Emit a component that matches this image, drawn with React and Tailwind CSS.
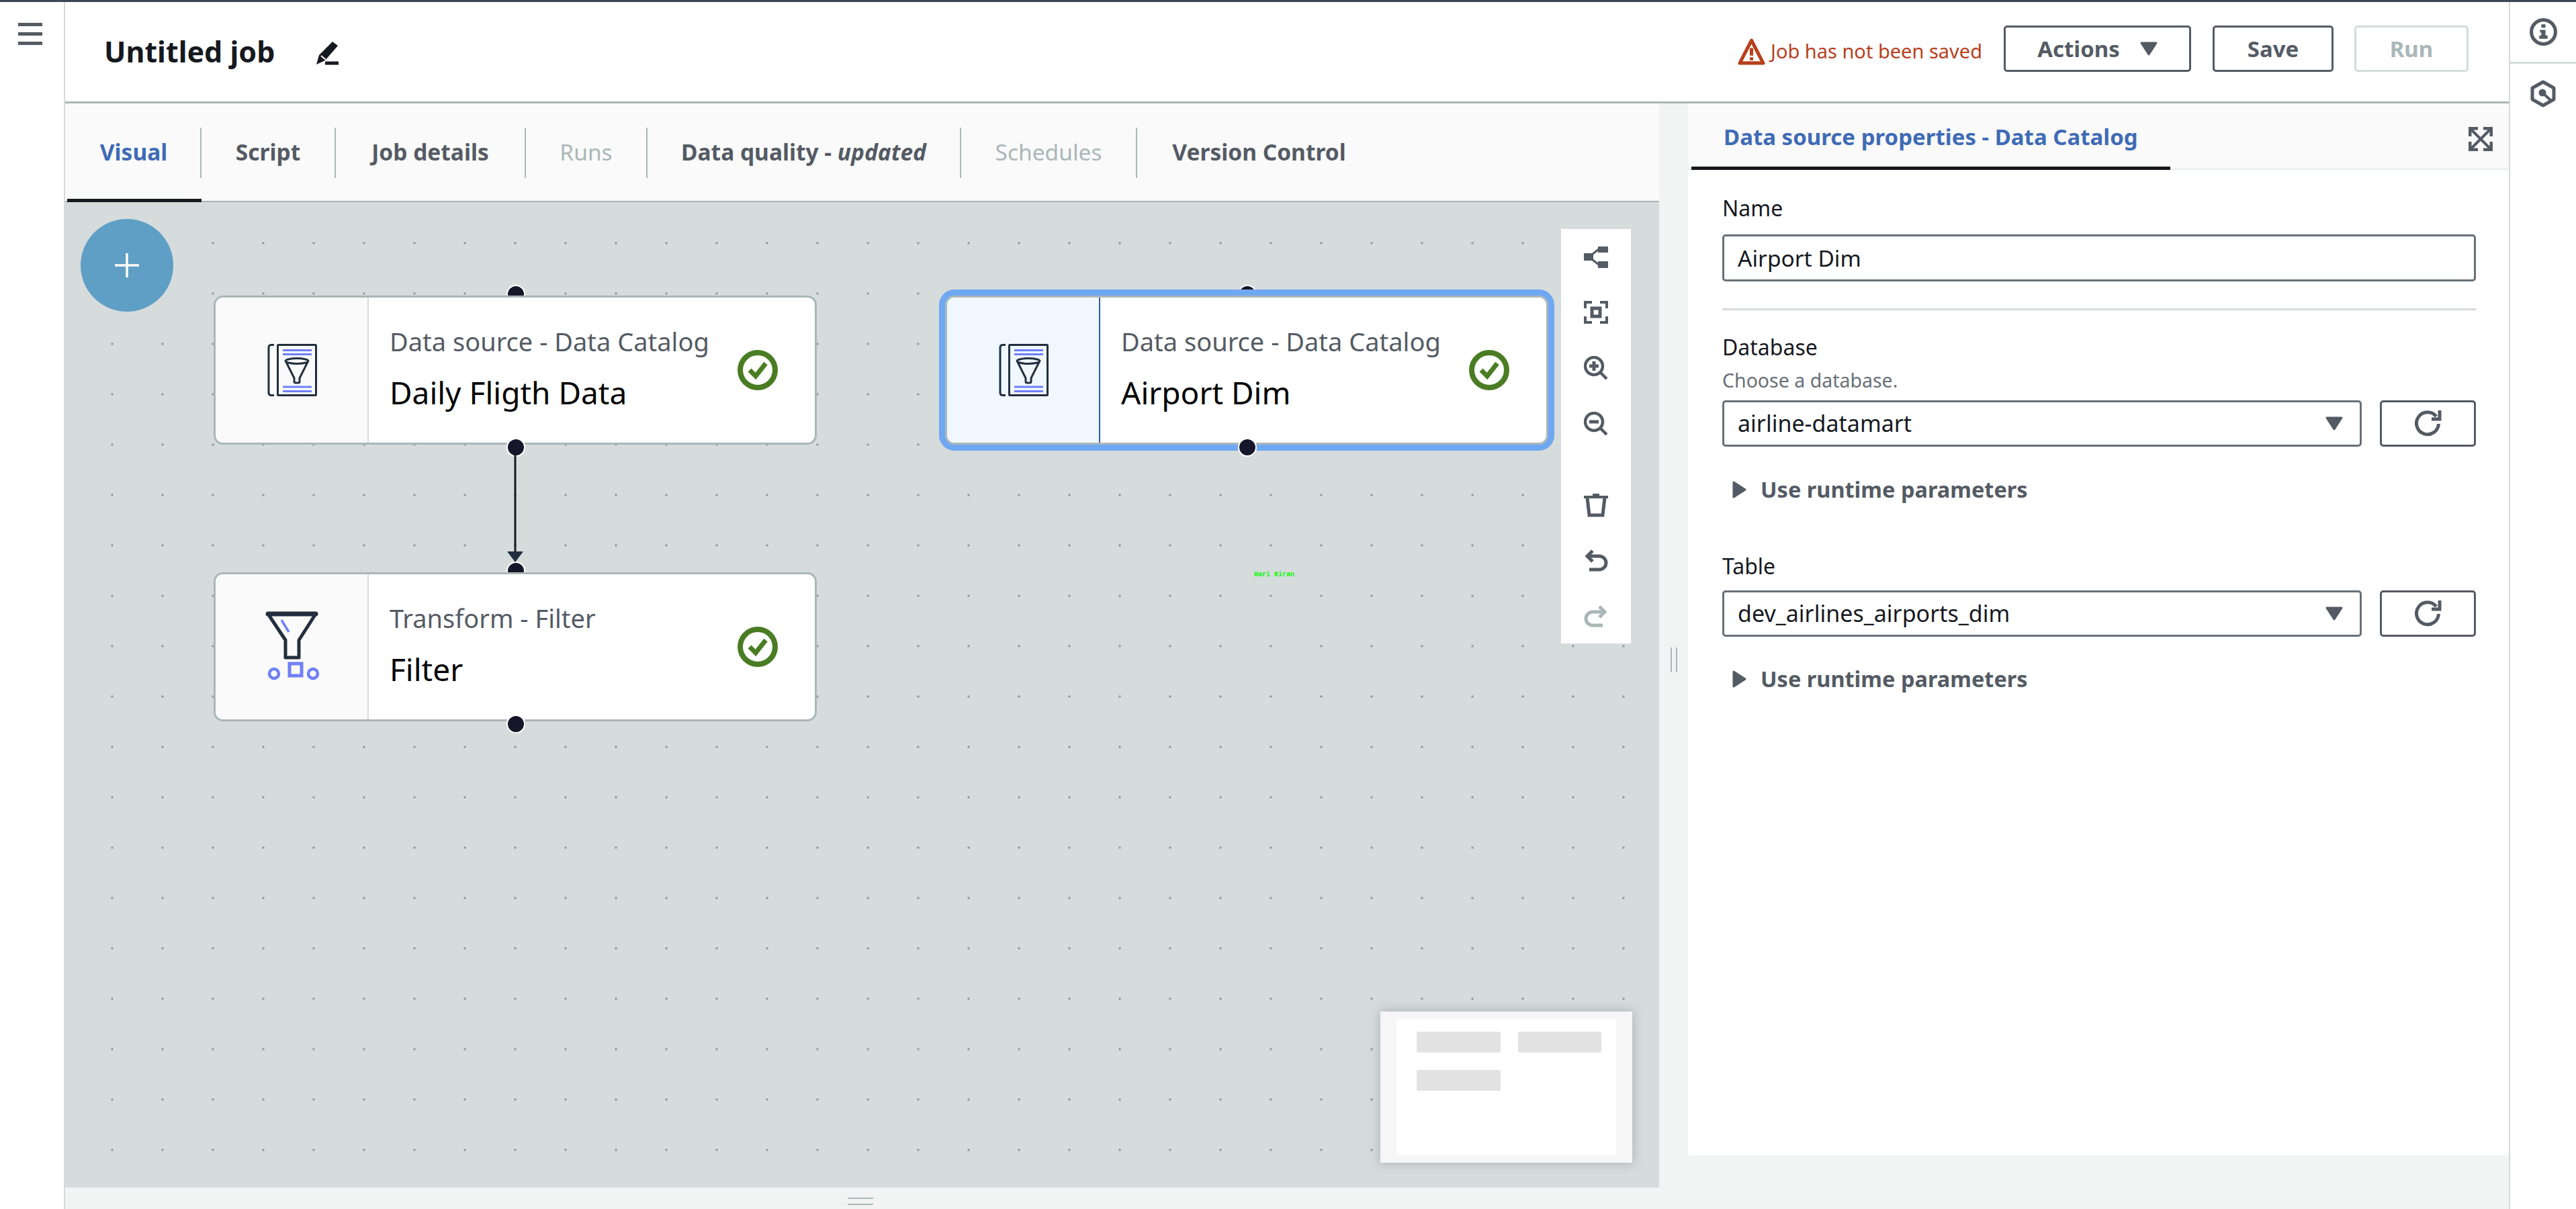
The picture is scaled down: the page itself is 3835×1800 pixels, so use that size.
const TABS = [
  { label: 'Visual', width: 'w-[200px] border-r-2', text: 'text-[#3f6bb5]', active: true },
  { label: 'Script', width: 'w-[200px] border-r-2', text: 'text-[#545b64]' },
  { label: 'Job details', width: 'w-[283px] border-r-2', text: 'text-[#545b64]' },
  { label: 'Runs', width: 'w-[181px] border-r-2', text: 'text-[#aab7b8] font-normal' },
  { label: 'Data quality', width: 'w-[467px] border-r-2', text: 'text-[#545b64]', updated: true },
  { label: 'Schedules', width: 'w-[262px] border-r-2', text: 'text-[#aab7b8] font-normal' },
  { label: 'Version Control', width: 'w-[363px]', text: 'text-[#545b64]' },
]

function CatalogIcon() {
  return (
    <svg width="80" height="84" viewBox="5 6 80 84" fill="none">
      <path d="M17 10.5h-4q-4 0-4 4v67q0 4 4 4h4" stroke="#232f3e" strokeWidth="3" />
      <rect x="22.5" y="10.5" width="57" height="75" rx="1" stroke="#232f3e" strokeWidth="3" />
      <path d="M30 18.5h43M30 24.5h43M30 73h43M30 79.5h43" stroke="#6f80f7" strokeWidth="3" />
      <ellipse cx="51" cy="34.5" rx="17" ry="4" stroke="#232f3e" strokeWidth="3" />
      <path d="M35 36l12 24v5q0 2 2 2h4q2 0 2-2v-5l12-24" stroke="#232f3e" strokeWidth="3" strokeLinejoin="round" />
    </svg>
  )
}

function FilterIcon() {
  return (
    <svg width="82" height="106" viewBox="0 0 82 106" fill="none">
      <path d="M4 4h71l-25 39v26H30V43z" stroke="#232f3e" strokeWidth="5" strokeLinejoin="round" />
      <path d="M4 4h71" stroke="#232f3e" strokeWidth="7" strokeLinecap="round" />
      <path d="M24 13l11 18" stroke="#6f80f7" strokeWidth="3.5" />
      <circle cx="13" cy="93" r="7" stroke="#6f80f7" strokeWidth="4.5" />
      <rect x="36" y="78" width="18" height="18" stroke="#6f80f7" strokeWidth="5" />
      <circle cx="71" cy="93" r="7" stroke="#6f80f7" strokeWidth="4.5" />
    </svg>
  )
}

function CheckIcon() {
  return (
    <svg width="60" height="60" viewBox="0 0 60 60" fill="none" className="shrink-0">
      <circle cx="30" cy="30" r="26" stroke="#4a7d23" strokeWidth="8" />
      <path d="M18 30l9 9 15-19" stroke="#4a7d23" strokeWidth="7" />
    </svg>
  )
}

function Caret({ className }) {
  return (
    <svg width="26" height="21" viewBox="0 0 26 21" className={className}>
      <path d="M2 2h22L13 19z" fill="#545b64" stroke="#545b64" strokeWidth="3" strokeLinejoin="round" />
    </svg>
  )
}

function Refresh() {
  return (
    <svg width="40" height="42" viewBox="0 0 40 42" fill="none">
      <path d="M32 10A16.5 16.5 0 1 0 35.5 21" stroke="#545b64" strokeWidth="5" />
      <path d="M25 14h12V1" stroke="#545b64" strokeWidth="5" />
    </svg>
  )
}

function ToolIcon({ children, className = '' }) {
  return (
    <svg width="36" height="36" viewBox="0 0 36 36" fill="none" className={className}>
      {children}
    </svg>
  )
}

function Handle({ className }) {
  return <div className={`absolute left-[436px] w-[28px] h-[28px] rounded-full bg-[#16162a] border-2 border-white ${className}`}></div>
}

function Node({ pos, title, name, icon, selected }) {
  return (
    <div className={`absolute w-[898px] h-[222px] ${pos}`}>
      <Handle className="top-[-16px]" />
      <div
        className={`relative flex w-full h-full rounded-[14px] border-[3px] border-[#aab7b8] bg-white overflow-hidden ${
          selected ? 'outline-[9px] outline-[#6ea8f2] overflow-visible' : ''
        }`}
      >
        <div
          className={`w-[228px] shrink-0 flex items-center justify-center pl-[3px] rounded-l-[11px] border-r-2 ${
            selected ? 'bg-[#f0f7ff] border-[#2f5f9e]' : 'bg-[#fafafa] border-[#d5dbdb]'
          }`}
        >
          {icon}
        </div>
        <div className="flex-1 flex items-center pl-[31px] pr-[55px]">
          <div className="flex-1 pb-[5px]">
            <div className="text-[38px] leading-[44px] text-[#545b64]">{title}</div>
            <div className="mt-[27px] text-[46px] leading-[54px] text-[#000]">{name}</div>
          </div>
          <CheckIcon />
        </div>
      </div>
      <Handle className="bottom-[-18px]" />
    </div>
  )
}

function SelectRow({ value }) {
  return (
    <div className="flex gap-[27px] mt-[10px]">
      <div className="flex-1 h-[69px] flex items-center justify-between pl-[20px] pr-[25px] border-[3px] border-[#687078] rounded-[5px] text-[34px] text-[#16191f]">
        <span>{value}</span>
        <Caret />
      </div>
      <div className="w-[143px] h-[69px] flex items-center justify-center border-[3px] border-[#545b64] rounded-[5px]">
        <Refresh />
      </div>
    </div>
  )
}

function RuntimeParams({ className }) {
  return (
    <div className={`flex items-center gap-[21px] pl-[15px] h-[44px] ${className}`}>
      <svg width="21" height="26" viewBox="0 0 21 26">
        <path d="M2 2l17 11L2 24z" fill="#545b64" stroke="#545b64" strokeWidth="3" strokeLinejoin="round" />
      </svg>
      <span className="text-[32.5px] font-bold text-[#545b64]">Use runtime parameters</span>
    </div>
  )
}

export default function App() {
  return (
    <div className="w-[3835px] h-[1800px] flex flex-col bg-white overflow-hidden font-['Noto_Sans','Open_Sans',sans-serif]">
      <div className="h-[3px] bg-[#3a4653] shrink-0"></div>
      <div className="flex-1 flex min-h-0">
        {/* Left rail */}
        <div className="w-[97px] shrink-0 border-r-2 border-[#d5dbdb] pt-[31px] pl-[27px]">
          <div className="w-[36px] flex flex-col gap-[9px]">
            <div className="h-[5px] bg-[#545b64]"></div>
            <div className="h-[5px] bg-[#545b64]"></div>
            <div className="h-[5px] bg-[#545b64]"></div>
          </div>
        </div>

        {/* Main */}
        <div className="flex-1 min-w-0 flex flex-col">
          <div className="h-[151px] shrink-0 flex items-center border-b-[3px] border-[#aab7b8] pl-[58px] pr-[60px] pb-[2px]">
            <span className="text-[43px] font-bold text-[#16191f] leading-none">Untitled job</span>
            <svg width="36" height="36" viewBox="0 0 36 36" className="ml-[60px] mt-[6px]">
              <path d="M26 1l8 6-19 22-13 6 4-14z" fill="#16191f" />
              <path d="M9 22l7 6" stroke="#fff" strokeWidth="2" />
              <path d="M15 33h20" stroke="#16191f" strokeWidth="5" />
            </svg>
            <div className="flex-1"></div>
            <svg width="41" height="41" viewBox="0 0 40 40" fill="none">
              <path d="M20 4L37 37H3z" stroke="#b7401e" strokeWidth="5" strokeLinejoin="round" />
              <path d="M17.5 15h5v11h-5zM17.5 28.5h5v4.5h-5z" fill="#b7401e" />
            </svg>
            <span className="ml-[8px] text-[29px] text-[#b7401e]">Job has not been saved</span>
            <div className="ml-[32px] mb-[7px] w-[279px] h-[69px] flex items-center justify-center gap-[30px] border-[3px] border-[#545b64] rounded-[5px] text-[33px] font-bold text-[#545b64]">
              Actions
              <Caret />
            </div>
            <div className="ml-[32px] mb-[7px] w-[180px] h-[69px] flex items-center justify-center border-[3px] border-[#545b64] rounded-[5px] text-[33px] font-bold text-[#545b64]">
              Save
            </div>
            <div className="ml-[31px] mb-[7px] w-[170px] h-[69px] flex items-center justify-center border-[3px] border-[#d5dbdb] rounded-[5px] text-[33px] font-bold text-[#aab7b8]">
              Run
            </div>
          </div>

          <div className="flex-1 min-h-0 flex flex-col bg-[#f2f3f3]">
            <div className="flex-1 min-h-0 flex">
              {/* Editor column */}
              <div className="w-[2373px] shrink-0 flex flex-col">
                <div className="h-[147px] shrink-0 flex items-center pl-[3px] bg-[#fafafa] border-b-2 border-[#aab7b8] relative">
                  {TABS.map((tab) => (
                    <div
                      key={tab.label}
                      className={`h-[75px] mt-[1px] pb-[2px] flex items-center justify-center border-[#aab7b8] text-[33.5px] font-bold whitespace-pre ${tab.width} ${tab.text}`}
                    >
                      {tab.label}
                      {tab.updated && <span> - <i>updated</i></span>}
                    </div>
                  ))}
                  <div className="absolute left-[3px] bottom-[-2px] w-[200px] h-[5px] bg-[#16191f]"></div>
                </div>

                <div className="relative flex-1 bg-[#d6dbdc] bg-[radial-gradient(circle,#8d9899_1.6px,transparent_2px)] bg-[length:75px_75px] bg-[position:32.5px_23.5px]">
                  {/* Add node */}
                  <div className="absolute left-[23px] top-[25px] w-[138px] h-[138px] rounded-full bg-[#5f9fc5] flex items-center justify-center">
                    <svg width="36" height="36" viewBox="0 0 36 36">
                      <path d="M18 0v36M0 18h36" stroke="#fff" strokeWidth="3.5" />
                    </svg>
                  </div>

                  <Node pos="left-[221px] top-[139px]" title="Data source - Data Catalog" name="Daily Fligth Data" icon={<CatalogIcon />} />
                  <Node pos="left-[221px] top-[551px]" title="Transform - Filter" name="Filter" icon={<FilterIcon />} />
                  <Node pos="left-[1310px] top-[139px]" title="Data source - Data Catalog" name="Airport Dim" icon={<CatalogIcon />} selected />

                  {/* Edge between source and filter */}
                  <svg width="28" height="162" viewBox="0 0 28 162" className="absolute left-[656px] top-[376px]">
                    <path d="M14 0v145" stroke="#16191f" strokeWidth="3" />
                    <path d="M2 144h24l-12 16z" fill="#232f3e" />
                  </svg>

                  <div className="absolute left-[1770px] top-[547px] text-[10px] leading-[16px] font-bold font-['Liberation_Mono',monospace] text-[#00ff00]">
                    Hari Kiran
                  </div>

                  {/* Canvas tools */}
                  <div className="absolute left-[2227px] top-[40px] w-[104px] h-[617px] bg-white flex flex-col items-center pt-[23px]">
                    <ToolIcon>
                      <path d="M0 13h14v11H0zM21 3h15v9H21zM21 25h15v10H21z" fill="#545b64" />
                      <path d="M12 15l10-8M12 22l10 8" stroke="#545b64" strokeWidth="3" />
                    </ToolIcon>
                    <ToolIcon className="mt-[47px]">
                      <path d="M2 12V3h10M24 3h10v9M2 24v9h10M24 33h10v-9" stroke="#545b64" strokeWidth="4" />
                      <rect x="12" y="12" width="12" height="12" stroke="#545b64" strokeWidth="5" />
                    </ToolIcon>
                    <ToolIcon className="mt-[47px]">
                      <circle cx="15" cy="15" r="13" stroke="#545b64" strokeWidth="4.5" />
                      <path d="M8 15h14M15 8v14" stroke="#545b64" strokeWidth="5" />
                      <path d="M24 24l10 10" stroke="#545b64" strokeWidth="4.5" />
                    </ToolIcon>
                    <ToolIcon className="mt-[47px]">
                      <circle cx="15" cy="15" r="13" stroke="#545b64" strokeWidth="4.5" />
                      <path d="M8 15h14" stroke="#545b64" strokeWidth="5" />
                      <path d="M24 24l10 10" stroke="#545b64" strokeWidth="4.5" />
                    </ToolIcon>
                    <ToolIcon className="mt-[85px]">
                      <path d="M0 6h36M13 3h10" stroke="#545b64" strokeWidth="4" />
                      <path d="M5 7l3 26h20l3-26" stroke="#545b64" strokeWidth="5" />
                    </ToolIcon>
                    <ToolIcon className="mt-[47px]">
                      <path d="M13 3L5 11l8 8" stroke="#545b64" strokeWidth="5" />
                      <path d="M6 11h17a10 10 0 0 1 0 20H8" stroke="#545b64" strokeWidth="5" />
                    </ToolIcon>
                    <ToolIcon className="mt-[47px]">
                      <path d="M23 3l8 8-8 8" stroke="#aab7b8" strokeWidth="5" />
                      <path d="M30 11H13a10 10 0 0 0 0 20h15" stroke="#aab7b8" strokeWidth="5" />
                    </ToolIcon>
                  </div>

                  {/* Minimap */}
                  <div className="absolute left-[1958px] top-[1205px] w-[375px] h-[225px] bg-[#f6f6f6] shadow-[0_0_16px_rgba(84,91,100,0.35)] px-[24px] py-[11px]">
                    <div className="h-full bg-white pl-[30px] pr-[22px] pt-[19px]">
                      <div className="grid grid-cols-[125px_124px] gap-x-[26px] gap-y-[26px]">
                        <div className="h-[31px] bg-[#e2e2e2] rounded-[2px]"></div>
                        <div className="h-[31px] bg-[#e2e2e2] rounded-[2px]"></div>
                        <div className="h-[31px] bg-[#e2e2e2] rounded-[2px]"></div>
                      </div>
                    </div>
                  </div>
                </div>
              </div>

              {/* Splitter */}
              <div className="w-[43px] shrink-0 flex justify-center pt-[810px] pl-[1px]">
                <div className="w-[10px] h-[37px] border-x-2 border-[#aab7b8]"></div>
              </div>

              {/* Properties panel */}
              <div className="flex-1 min-w-0 flex flex-col pb-[48px]">
                <div className="h-[99px] shrink-0 flex items-end justify-between bg-[#fafafa] border-b-2 border-[#eaeded] pl-[5px] pr-[24px] relative">
                  <div className="w-[713px] h-[97px] border-b-[5px] border-[#16191f] mb-[-2px] pl-[48px] pt-[25px] text-[33px] leading-[46px] font-bold text-[#3f6bb5]">
                    Data source properties - Data Catalog
                  </div>
                  <svg width="36" height="36" viewBox="0 0 36 36" fill="none" className="mb-[26px]">
                    <path d="M2 14V2h12M22 2h12v12M2 22v12h12M22 34h12V22" stroke="#545b64" strokeWidth="5" />
                    <path d="M4 4l28 28M32 4L4 32" stroke="#545b64" strokeWidth="4" />
                  </svg>
                </div>
                <div className="flex-1 bg-white pl-[51px] pr-[49px] pt-[35px]">
                  <div className="text-[32px] leading-[44px] text-[#16191f]">Name</div>
                  <div className="mt-[17px] h-[70px] flex items-center pl-[20px] border-[3px] border-[#687078] rounded-[5px] text-[33.5px] text-[#16191f]">
                    Airport Dim
                  </div>
                  <div className="mt-[40px] h-[3px] bg-[#d5dbdb]"></div>
                  <div className="mt-[33px] text-[32px] leading-[44px] text-[#16191f]">Database</div>
                  <div className="mt-[7px] text-[28.5px] leading-[40px] text-[#687078]">Choose a database.</div>
                  <SelectRow value="airline-datamart" />
                  <RuntimeParams className="mt-[42px]" />
                  <div className="mt-[70px] text-[32px] leading-[44px] text-[#16191f]">Table</div>
                  <div className="mt-[14px]">
                    <SelectRow value="dev_airlines_airports_dim" />
                  </div>
                  <RuntimeParams className="mt-[41px]" />
                </div>
              </div>
            </div>

            {/* Bottom drag handle */}
            <div className="h-[32px] shrink-0 flex justify-center pt-[15px] pr-[1270px]">
              <div className="w-[38px] h-[11px] border-y-2 border-[#aab7b8]"></div>
            </div>
          </div>
        </div>

        {/* Right rail */}
        <div className="w-[100px] shrink-0 border-l-2 border-[#d5dbdb] flex flex-col">
          <div className="h-[92px] flex items-center justify-center border-b-[3px] border-[#d5dbdb]">
            <svg width="41" height="41" viewBox="0 0 40 40" fill="none">
              <circle cx="20" cy="20" r="17.5" stroke="#545b64" strokeWidth="5" />
              <path d="M17 9h6v5h-6zM15 17h8v8h3v5H14v-5h3v-4h-2z" fill="#545b64" />
            </svg>
          </div>
          <div className="flex justify-center pt-[24px]">
            <svg width="38" height="41" viewBox="0 0 38 41" fill="none">
              <path d="M19 3l16 9v17l-16 9-16-9V12z" stroke="#545b64" strokeWidth="5" strokeLinejoin="round" />
              <circle cx="18" cy="19" r="5.5" fill="#545b64" />
              <path d="M18 19l12 11" stroke="#545b64" strokeWidth="4" />
            </svg>
          </div>
        </div>
      </div>
    </div>
  )
}
